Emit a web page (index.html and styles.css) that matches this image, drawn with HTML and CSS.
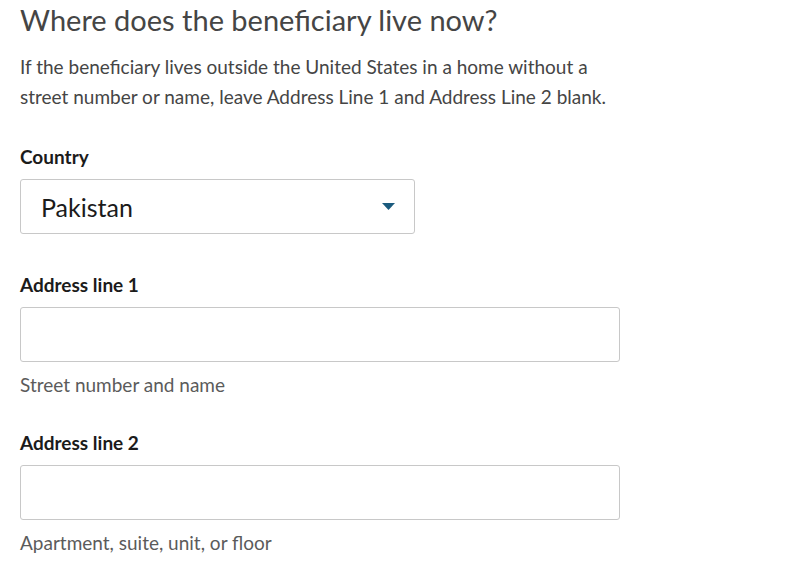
FILE: index.html
```html
<!DOCTYPE html>
<html lang="en">
<head>
    <meta charset="UTF-8">
    <meta name="viewport" content="width=device-width, initial-scale=1.0">
    <title>Beneficiary Address</title>
    <link rel="stylesheet" href="styles.css">
</head>
<body>
    <div class="page">
        <h1 class="title">Where does the beneficiary live now?</h1>
        <p class="intro">If the beneficiary lives outside the United States in a home without a street number or name, leave Address Line 1 and Address Line 2 blank.</p>

        <div class="field field-select">
            <label class="label" for="country">Country</label>
            <div class="select-box">
                <span class="select-value">Pakistan</span>
                <svg class="caret" width="13" height="7" viewBox="0 0 13 7"><path d="M0 0h13L6.5 7z" fill="#1b5b7e"/></svg>
            </div>
        </div>

        <div class="field">
            <label class="label" for="line1">Address line 1</label>
            <input class="text-input" type="text" id="line1">
            <div class="hint">Street number and name</div>
        </div>

        <div class="field">
            <label class="label" for="line2">Address line 2</label>
            <input class="text-input" type="text" id="line2">
            <div class="hint">Apartment, suite, unit, or floor</div>
        </div>
    </div>
</body>
</html>
```
FILE: styles.css
```css
body {
    margin: 0;
    background: #ffffff;
    font-family: Lato, "Open Sans", sans-serif;
    color: #1b1b1b;
}
.page {
    padding: 0 20px;
}
.title {
    margin: 0;
    padding-top: 2px;
    font-size: 29px;
    font-weight: 400;
    line-height: 36px;
    color: #454545;
}
.intro {
    margin: 14px 0 -1px;
    width: 590px;
    font-size: 19px;
    line-height: 30px;
    color: #454545;
}
.field {
    margin-top: 34px;
}
.field-select {
    padding-bottom: 5px;
}
.label {
    display: block;
    font-size: 19px;
    font-weight: 700;
    line-height: 24px;
    color: #1b1b1b;
}
.select-box {
    margin-top: 10px;
    width: 395px;
    height: 55px;
    box-sizing: border-box;
    border: 1px solid #c8c8c8;
    border-radius: 3px;
    display: flex;
    align-items: center;
    justify-content: space-between;
    padding: 0 19px 0 20px;
}
.select-value {
    font-size: 25px;
    color: #1b1b1b;
}
.text-input {
    display: block;
    margin-top: 10px;
    width: 600px;
    height: 55px;
    box-sizing: border-box;
    border: 1px solid #c8c8c8;
    border-radius: 3px;
    font: inherit;
}
.hint {
    margin-top: 11px;
    font-size: 19px;
    line-height: 24px;
    color: #5b5b5b;
}
```
